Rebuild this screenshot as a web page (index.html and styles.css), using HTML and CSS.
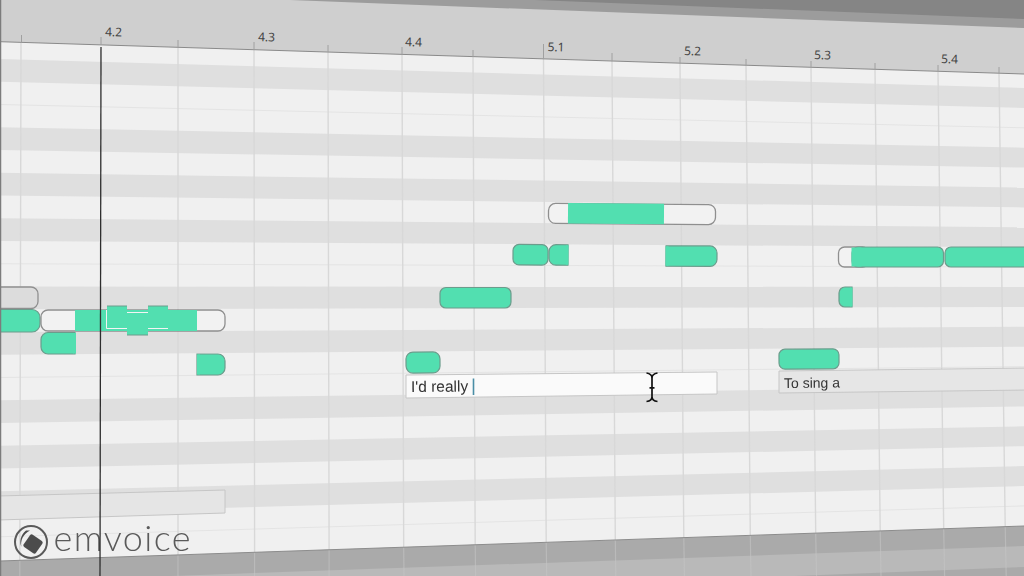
FILE: index.html
```html
<!DOCTYPE html>
<html lang="en">
<head>
<meta charset="utf-8">
<title>emvoice piano roll</title>
<link rel="stylesheet" href="styles.css">
</head>
<body>
<main class="stage">
<svg class="canvas" width="1024" height="576" viewBox="0 0 1024 576" xmlns="http://www.w3.org/2000/svg">
  <!-- window chrome above the ruler -->
  <rect class="ruler" width="1024" height="80"/>
  <polygon class="chrome-mid" points="290,0 1024,28 1024,0"/>
  <polygon class="chrome-dark" points="535,0 1024,19 1024,0"/>

  <!-- grid sheet -->
  <polygon class="sheet" points="0,41.7 1024,74 1024,526 0,561"/>
  <g class="bands">
    <polygon points="0,59 1024,88 1024,107.9 0,81.75"/>
    <polygon points="0,127.25 1024,147.7 1024,167.6 0,150"/>
    <polygon points="0,172.75 1024,187.5 1024,207.4 0,195.5"/>
    <polygon points="0,218.25 1024,227.3 1024,247.2 0,241"/>
    <polygon points="0,286.5 1024,287 1024,306.9 0,309.25"/>
    <polygon points="0,332 1024,326.8 1024,346.7 0,354.75"/>
    <polygon points="0,400.25 1024,386.5 1024,406.4 0,423"/>
    <polygon points="0,445.75 1024,426.3 1024,446.2 0,468.5"/>
    <polygon points="0,491.25 1024,466.1 1024,486 0,514"/>
  </g>
  <path class="rowlines" d="M0 104.5L1024 127.8M0 263.75L1024 267M0 377.5L1024 366.6M0 536.75L1024 505.9"/>
  <path class="gridlines" d="M21 42.4L19.8 560.3M178 47.4L178 554.8M254 49.8L254.6 552.1M328 52.2L329.1 549.5M402 54.6L403.7 546.9M473 56.8L475.2 544.4M543.5 59.1L546.2 542M612 61.3L615.3 539.6M680 63.5L683.8 537.2M746 65.6L750.3 534.9M811 67.7L815.7 532.6M875 69.7L880.2 530.4M938 71.7L943.7 528.2M999 73.7L1005.2 526"/>

  <!-- footer below the sheet -->
  <polygon class="footer" points="0,561 1024,526 1024,576 0,576"/>
  <polygon class="footer-light" points="171,576 1024,546 1024,567 795,576"/>
  <path class="footer-lines" d="M19.8 560.3V576M178 554.8V576M254.6 552.1V576M329.1 549.5V576M403.7 546.9L404 576M475.2 544.4L475.6 576M546.2 542L546.7 576M615.3 539.6L615.8 576M683.8 537.2L684.4 576M750.3 534.9L751 576M815.7 532.6L816.5 576M880.2 530.4L881 576M943.7 528.2L944.6 576M1005.2 526L1006.2 576"/>
  <line class="sheet-bottom" x1="0" y1="561" x2="1024" y2="526"/>

  <!-- ruler -->
  <line class="sheet-top" x1="0" y1="41.7" x2="1024" y2="74"/>
  <path class="ticks" d="M21.5 35V42.4M101 37V44.5M178 40V47.4M254 42V49.8M328 45V52.2M402 47V54.6M473 50V56.8M543.5 44V59.1M612 53V61.3M680 57V63.5M746 59V65.6M811 61V67.7M875 63V69.7M938 65V71.7M999 67V73.7"/>
  <g class="beats">
    <text x="105" y="36" transform="rotate(1.8 105 36)">4.2</text>
    <text x="258" y="41" transform="rotate(1.8 258 41)">4.3</text>
    <text x="405" y="46" transform="rotate(1.8 405 46)">4.4</text>
    <text x="547.5" y="51" transform="rotate(1.8 547.5 51)">5.1</text>
    <text x="684" y="55" transform="rotate(1.8 684 55)">5.2</text>
    <text x="814" y="59" transform="rotate(1.8 814 59)">5.3</text>
    <text x="941" y="63" transform="rotate(1.8 941 63)">5.4</text>
  </g>

  <!-- first phrase -->
  <rect class="ghost ghost-dim" x="-10" y="287" width="48" height="21.5" rx="7"/>
  <rect class="note" x="-10" y="309.5" width="50" height="22.5" rx="8"/>
  <rect class="ghost" x="41" y="310" width="184" height="21" rx="7"/>
  <rect class="fill" x="75" y="310" width="122" height="21"/>
  <rect class="fill" x="107" y="306" width="20" height="23"/>
  <rect class="fill" x="148" y="306" width="20" height="23"/>
  <rect class="fill" x="127" y="313" width="21" height="22"/>
  <path class="seam-light" d="M106.500 310V328.500H127M127 312.500H148M148 328.500H168"/>
  <path class="seam-dark" d="M107 306H127M148 306H168M127 335H148"/>
  <path class="note" d="M75 332.5H48a7 7 0 0 0-7 7V347a7 7 0 0 0 7 7H75Z"/>
  <path class="note" d="M197 354H218a7 7 0 0 1 7 7V368a7 7 0 0 1-7 7H197Z"/>
  <rect class="fill" x="197" y="354.5" width="3" height="20"/>
  <rect class="fill" x="73" y="333" width="3" height="20.5"/>

  <!-- second phrase -->
  <rect class="note" x="406" y="352" width="34" height="21" rx="7" transform="rotate(-0.4 423 362)"/>
  <rect class="note" x="440" y="287.5" width="71" height="20.5" rx="6"/>
  <g transform="rotate(0.4 632 214)">
    <rect class="ghost" x="548.5" y="204" width="167" height="20" rx="7"/>
    <rect class="fill" x="568" y="203.5" width="96" height="20.5"/>
  </g>
  <g transform="rotate(0.3 620 255)">
    <rect class="note" x="513" y="245" width="35" height="20.5" rx="6"/>
    <path class="note" d="M568 245H556a7 7 0 0 0-7 7V258.500a7 7 0 0 0 7 7H568Z"/>
    <rect class="fill" x="566" y="245.500" width="2.500" height="19.500"/>
    <path class="note" d="M666 245.500H710a7 7 0 0 1 7 7V259a7 7 0 0 1-7 7H666Z"/>
    <rect class="fill" x="665.500" y="246" width="3" height="19.500"/>
  </g>

  <!-- third phrase -->
  <rect class="ghost" x="838.500" y="247" width="30" height="20" rx="6"/>
  <rect class="note" x="852" y="247" width="91.500" height="20" rx="6"/>
  <rect class="fill" x="851.500" y="247.500" width="10" height="19"/>
  <rect class="note" x="945" y="247" width="100" height="20" rx="6"/>
  <path class="note" d="M852 287H845a6 6 0 0 0-6 6V301a6 6 0 0 0 6 6H852Z"/>
  <rect class="fill" x="850" y="287.500" width="2.500" height="19"/>
  <rect class="note" x="779" y="349" width="60" height="20" rx="6" transform="rotate(-0.4 809 359)"/>

  <!-- lyric fields -->
  <polygon class="field field-dim" points="-2,496 225,490 225,513 -2,520"/>
  <polygon class="field field-active" points="406,375 717,372 717,394 406,398"/>
  <polygon class="field field-idle" points="779,371 1030,368 1030,390 779,393"/>
  <text class="lyric lyric-near" x="411" y="392" transform="rotate(-0.5 411 392)">I'd really</text>
  <text class="lyric" x="784" y="388" transform="rotate(-0.5 784 388)">To sing a</text>
  <line class="caret" x1="473.500" y1="378.500" x2="473.500" y2="395"/>
  <path class="ibeam" d="M646.500 373C650 373.500 652 375 652 378V397C652 400 650 401 646.500 401.500M657.500 373C654 373.500 652 375 652 378M657.500 401.500C654 401 652 400 652 397M649.500 387.800H654.500"/>

  <line class="left-edge" x1="0.5" y1="0" x2="0.5" y2="576"/>

  <!-- logo -->
  <circle class="logo-ring" cx="31" cy="542" r="16"/>
  <rect class="logo-mark" x="25.500" y="536.500" width="15" height="15" rx="2" transform="rotate(35 33 544)"/>
  <path class="logo-mark" d="M21.500 547C20 541 23 534 30 530.500L26 530.500C20.500 535 19 542 21.500 547Z"/>
  <text class="wordmark" x="53.500" y="551">emvoice</text>

  <!-- playhead -->
  <line class="playhead" x1="101" y1="47" x2="100" y2="576"/>
</svg>
</main>
</body>
</html>
```

FILE: styles.css
```css
html, body {
  margin: 0;
  padding: 0;
  background: #efefef;
}

.stage {
  width: 1024px;
  height: 576px;
  overflow: hidden;
}

.canvas {
  display: block;
  filter: blur(0.5px);
}

.ruler { fill: #cfcfcf; }
.chrome-mid { fill: #9c9c9c; }
.chrome-dark { fill: #858585; }

.sheet { fill: #f0f0f0; }
.bands polygon { fill: #dfdfdf; }

.rowlines {
  fill: none;
  stroke: #e4e4e4;
  stroke-width: 1;
}

.gridlines {
  fill: none;
  stroke: #d8d8d8;
  stroke-width: 1.4;
}

.footer { fill: #aaaaaa; }
.footer-light { fill: #b9b9b9; }

.footer-lines {
  fill: none;
  stroke: #c4c4c4;
  stroke-width: 1.2;
  opacity: 0.6;
}

.sheet-bottom {
  stroke: #8c8c8c;
  stroke-width: 1;
}

.sheet-top {
  stroke: #8a8a8a;
  stroke-width: 1;
}

.ticks {
  fill: none;
  stroke: #a0a0a0;
  stroke-width: 1;
}

.beats text {
  font-family: "Noto Sans", sans-serif;
  font-size: 12px;
  fill: #444444;
}

.left-edge {
  stroke: #7c7c7c;
  stroke-width: 1.5;
}

.note {
  fill: #52dfb0;
  stroke: #6c9c8c;
  stroke-width: 1.2;
}

.fill { fill: #52dfb0; }

.seam-light {
  fill: none;
  stroke: #f4f4f4;
  stroke-width: 1;
}

.seam-dark {
  fill: none;
  stroke: #6c9c8c;
  stroke-width: 1;
}

.ghost {
  fill: #f2f2f2;
  stroke: #8f8f8f;
  stroke-width: 1.3;
}

.ghost-dim { fill: #dcdcdc; }

.field { stroke: #c6c6c6; stroke-width: 1; }
.field-dim { fill: #e5e5e5; }
.field-active { fill: #fafafa; }
.field-idle { fill: #e6e6e6; }

.lyric {
  font-family: "Liberation Sans", sans-serif;
  font-size: 14px;
  fill: #333333;
}

.lyric-near { font-size: 15.5px; }

.caret {
  stroke: #4a8ea6;
  stroke-width: 1.6;
}

.ibeam {
  fill: none;
  stroke: #111111;
  stroke-width: 1.7;
}

.logo-ring {
  fill: none;
  stroke: #5a5a5a;
  stroke-width: 2;
}

.logo-mark { fill: #4c4c4c; }

.wordmark {
  font-family: "Lato", sans-serif;
  font-weight: 300;
  font-size: 36px;
  letter-spacing: 1.4px;
  fill: #5a5a5a;
}

.playhead {
  stroke: #2e2e2e;
  stroke-width: 1.3;
}
```
